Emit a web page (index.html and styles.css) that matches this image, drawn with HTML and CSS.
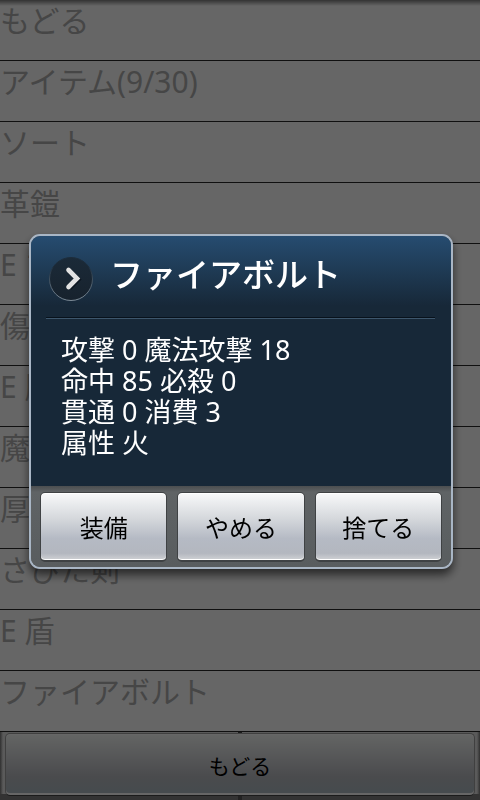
FILE: index.html
```html
<!DOCTYPE html>
<html lang="ja">
<head>
<meta charset="UTF-8">
<meta name="viewport" content="width=device-width, initial-scale=1.0">
<title>アイテム</title>
<link rel="stylesheet" href="styles.css">
</head>
<body>
<div class="screen">
<ul class="item-list">
<li>もどる</li>
<li>アイテム(9/30)</li>
<li>ソート</li>
<li>革鎧</li>
<li>E ブ</li>
<li>傷</li>
<li>E 服</li>
<li>魔</li>
<li>厚</li>
<li>さびた剣</li>
<li>E 盾</li>
<li>ファイアボルト</li>
</ul>
<div class="footer">
<button type="button" class="back">もどる</button>
</div>
</div>
<div class="overlay">
<div class="dialog" role="dialog" aria-modal="true" aria-labelledby="dialogTitle">
<div class="panel">
<div class="dialog-head">
<svg class="icon" width="46" height="46" viewBox="0 0 46 46" aria-hidden="true">
<defs>
<linearGradient id="rim" x1="0" y1="0" x2="0" y2="1"><stop offset="0.2" stop-color="#1c2c3b"/><stop offset="1" stop-color="#7c8a96"/></linearGradient>
<linearGradient id="disc" x1="0" y1="0" x2="0" y2="1"><stop offset="0" stop-color="#1b2a38"/><stop offset="1" stop-color="#17222d"/></linearGradient>
</defs>
<circle cx="23" cy="23" r="21.5" fill="url(#disc)" stroke="url(#rim)"/>
<path d="M21.5 15.5 L30 23.5 L21.5 32" fill="none" stroke="#0c1620" stroke-width="5"/>
<path d="M20.5 14 L29 22.5 L20.5 31" fill="none" stroke="#e2e2e2" stroke-width="4.6" stroke-linecap="round"/>
</svg>
<h2 id="dialogTitle">ファイアボルト</h2>
</div>
<div class="stats">
<p>攻撃 0 魔法攻撃 18</p>
<p>命中 85 必殺 0</p>
<p>貫通 0 消費 3</p>
<p>属性 火</p>
</div>
</div>
<div class="actions">
<button type="button">装備</button>
<button type="button">やめる</button>
<button type="button">捨てる</button>
</div>
</div>
</div>
</body>
</html>
```
FILE: styles.css
```css
* {box-sizing: border-box;margin: 0;padding: 0;}
body {background: #fff;font-family: "Noto Sans", "Noto Sans CJK JP", sans-serif;}
button {font-family: inherit;color: #000;cursor: pointer;}

.screen {display: flex;flex-direction: column;height: 100vh;}
.item-list {flex: 1;list-style: none;overflow: hidden;}
.item-list li {height: 61px;border-bottom: 1px solid #2a2a2a;font-size: 30px;line-height: 42px;color: #b0b0b0;white-space: nowrap;}

.footer {height: 68px;padding: 1px 5px 4px 5px;display: flex;background: linear-gradient(#444, #444) 50% 0 / 4px 2px no-repeat, linear-gradient(#555, #555) 50% 100% / 4px 4px no-repeat, linear-gradient(90deg, #777, #e0e0e0 3px, #e0e0e0 calc(100% - 3px), #777) 0 0 / 100% 62px no-repeat, #808080;}
.back {flex: 1;border: 1px solid #a0a0a0;border-bottom-color: #444;border-radius: 5px;font-size: 21px;background: linear-gradient(#f9fcfa, #b9bbc1 70%, #b0bbc2 92%, #b0bbc2);box-shadow: inset 0 -2px 0 #fff, inset 0 1px 0 #fff;}

.overlay {position: fixed;inset: 0;display: flex;align-items: center;padding: 3px 27px 0 29px;background: linear-gradient(rgba(0, 0, 0, 0.5), rgba(0, 0, 0, 0) 6px), rgba(0, 0, 0, 0.6);}
.dialog {flex: 1;border: 2px solid #a9b6c5;border-radius: 11px;overflow: hidden;background: #5c6062;box-shadow: 0 6px 10px rgba(0, 0, 0, 0.6);}
.panel {height: 250px;padding: 0 16px 0 15px;color: #fff;background: linear-gradient(#264c70, #172838 70px, #172838);}
.dialog-head {display: flex;align-items: center;gap: 16px;height: 83px;padding-left: 2px;border-bottom: 1px solid #3d566c;box-shadow: inset 0 -1px 0 #08121c;}
.icon {flex: none;margin-top: 4px;}
.dialog-head h2 {padding-bottom: 4px;font-size: 33px;font-weight: 500;line-height: 40px;}
.stats {padding: 15px;font-size: 27px;line-height: 31px;}

.actions {display: flex;gap: 10px;padding: 6px 9px 5px;background: linear-gradient(#4b4e50, #5f6365 6px, #595d5f);}
.actions button {flex: 1;height: 70px;border: 1px solid #3f4244;border-bottom-width: 2px;border-radius: 5px;font-size: 24px;background: linear-gradient(#f8f9fa, #d5d8dc 38%, #b5bac4 68%, #b3b7bf 90%, #d0d2d5);box-shadow: inset 0 -1px 0 #fff, inset 0 1px 0 #fff;}
```
